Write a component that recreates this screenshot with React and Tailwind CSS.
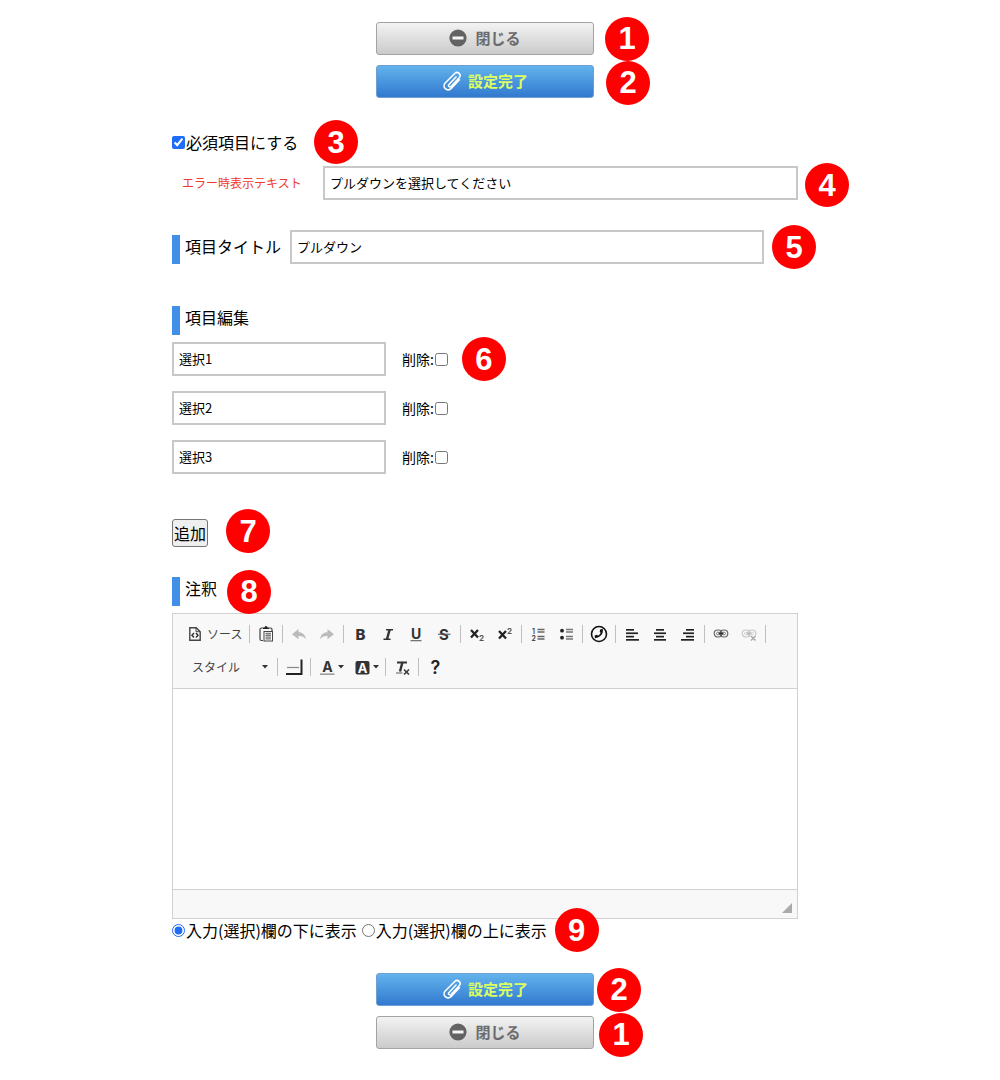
import React from "react";

const Badge = ({ children, className = "ml-2" }) => (
    <span className={`absolute left-full top-1/2 z-10 flex size-11 -translate-y-1/2 items-center justify-center rounded-full bg-[#ff0000] font-['Liberation_Sans',sans-serif] text-[31px] leading-none font-bold text-white ${className}`}>
        {children}
    </span>
)

function CloseButton({ badgeClass }) {
    return (
        <div className="relative">
            <button type="button" className="flex h-[33px] w-[218px] items-center justify-center gap-2 rounded-[3px] border border-[#a3a3a3] bg-linear-to-b from-[#f3f3f3] to-[#cbcbcb] pb-[2px] text-[15px] font-bold text-[#6b6b6b]">
                <svg viewBox="0 0 18 18" className="size-[18px]">
                    <circle cx="9" cy="9" r="8.6" fill="#636363" />
                    <rect x="3.5" y="7.5" width="11" height="3" fill="#f5f5f5" />
                </svg>
                閉じる
            </button>
            <Badge className={badgeClass}>1</Badge>
        </div>
    )
}

function DoneButton({ badgeClass }) {
    return (
        <div className="relative">
            <button type="button" className="flex h-[33px] w-[218px] items-center justify-center gap-[6px] rounded-[3px] border border-[#6f9fd0] bg-linear-to-b from-[#63b3ec] to-[#3279cf] pb-[2px] text-[15px] font-bold text-[#dcff62]">
                <svg viewBox="0 0 20 20" className="size-5" fill="none" stroke="#fff" strokeWidth="1.6" strokeLinecap="round">
                    <path d="M14 6 7 13.5a1.4 1.4 0 0 0 2 2l8.2-8.7a3.1 3.1 0 0 0-4.5-4.3L3.2 12a4 4 0 0 0 5.8 5.6l8.4-8.8" />
                </svg>
                設定完了
            </button>
            <Badge className={badgeClass}>2</Badge>
        </div>
    )
}

const Heading = ({ as: Tag = "h2", children, ...rest }) => (
    <Tag className="block h-[29px] border-l-8 border-[#428fe8] pl-[5px] text-base leading-[22px]" {...rest}>
        {children}
    </Tag>
)

const Glyph = ({ children }) => (
    <svg viewBox="0 0 20 20" className="size-5 font-[Inter,sans-serif]" fill="none" stroke="none">
        {children}
    </svg>
)

const Caret = () => (
    <svg viewBox="0 0 6 4" className="h-1 w-[6px]"><path d="M0 0h6L3 3.5z" fill="#333" /></svg>
)

const Sep = () => <span className="mx-[2px] h-[18px] w-px bg-[#c0c0c0]" />

const Tool = ({ label, wide, children }) => (
    <button type="button" aria-label={label} title={label} className={`flex h-7 items-center justify-center ${wide ? "w-[35px]" : "w-7"}`}>
        {children}
    </button>
)

const alignLines = {
    left: [[4, 8], [4, 12], [4, 8], [4, 13]],
    center: [[6, 8], [4, 12], [6, 8], [4, 12]],
    right: [[8, 8], [5, 11], [8, 8], [3, 13]],
}

const Align = ({ side }) => (
    <Glyph>
        {alignLines[side].map(([x, w], i) => (
            <rect key={i} x={x} y={[5, 8.4, 11.8, 15][i]} width={w} height="1.7" fill="#222" />
        ))}
    </Glyph>
)

const Chain = ({ color, link }) => (
    <>
        <rect x="3.2" y="6" width="7.6" height="7" rx="3.5" stroke={color} strokeWidth="1.2" />
        <rect x="9.2" y="6" width="7.6" height="7" rx="3.5" stroke={color} strokeWidth="1.2" />
        <rect x="5.5" y="8.2" width="3.5" height="2.6" rx="1.3" stroke={color} strokeWidth="0.8" />
        <rect x="11" y="8.2" width="3.5" height="2.6" rx="1.3" stroke={color} strokeWidth="0.8" />
        <path d="M7.5 9.5h5" stroke={link} strokeWidth="1.8" />
    </>
)

function Toolbar() {
    return (
        <div role="toolbar" className="flex flex-wrap items-center gap-y-[5px] border-b border-[#d1d1d1] bg-[#f8f8f8] px-2 pt-[6px] pb-[7px]">
            <button type="button" className="flex h-7 w-[66px] items-center gap-[2px] pl-1 text-[12px] whitespace-nowrap text-[#444]">
                <Glyph>
                    <path d="M4.8 3.7h6.4l4 4v8.6H4.8z" stroke="#444" strokeWidth="1.4" />
                    <path d="M11 3.7v4h4" stroke="#444" strokeWidth="1" />
                    <path d="m9 9-2 2.2 2 2.2M11 9l2 2.2-2 2.2" stroke="#333" strokeWidth="1.5" />
                </Glyph>
                ソース
            </button>
            <Sep />
            <Tool label="貼り付け">
                <Glyph>
                    <path d="M7 16.5H5.5A1.5 1.5 0 0 1 4 15V5.500A1.5 1.5 0 0 1 5.5 4H7M13 4h1.5A1.5 1.5 0 0 1 16 5.500V7" stroke="#444" strokeWidth="1.2" />
                    <path d="M7 5V3.500h1.500L9 2.300h2l.5 1.200H13V5z" fill="#222" />
                    <rect x="8" y="7.5" width="8.5" height="9.5" fill="#fff" stroke="#444" />
                    <path d="M9.5 9.500h5.500M9.500 11.300h5.500M9.500 13.100h5.500M9.500 14.900h5.500" stroke="#777" strokeWidth="1.3" />
                </Glyph>
            </Tool>
            <Sep />
            <Tool label="元に戻す">
                <Glyph><path d="M3 10.200 9.500 5v3.300c4 0 6.500 2.200 7.500 6.700-2-2.500-4.200-3.200-7.500-3.100v3.400z" fill="#bbb" /></Glyph>
            </Tool>
            <Tool label="やり直す">
                <Glyph><path d="M17 10.200 10.500 5v3.300c-4 0-6.500 2.200-7.500 6.700 2-2.500 4.200-3.200 7.500-3.100v3.400z" fill="#bbb" /></Glyph>
            </Tool>
            <Sep />
            <Tool label="太字">
                <Glyph><text x="10.5" y="16" textAnchor="middle" fontSize="15" fontWeight="800" fill="#333">B</text></Glyph>
            </Tool>
            <Tool label="斜体">
                <Glyph>
                    <path d="M8 5.800h7M5.500 15.200h7" stroke="#333" strokeWidth="1.6" />
                    <path d="M11.700 5.500 8.900 15.500" stroke="#333" strokeWidth="2.4" />
                </Glyph>
            </Tool>
            <Tool label="下線">
                <Glyph>
                    <text x="10" y="14.500" textAnchor="middle" fontSize="14" fontWeight="700" fill="#333">U</text>
                    <rect x="4.5" y="16" width="11" height="1.3" fill="#777" />
                </Glyph>
            </Tool>
            <Tool label="打ち消し線">
                <Glyph>
                    <text x="10" y="15.500" textAnchor="middle" fontSize="15" fontWeight="700" fill="#333">S</text>
                    <rect x="4" y="9.7" width="12.5" height="1.1" fill="#555" />
                </Glyph>
            </Tool>
            <Sep />
            <Tool label="下付き">
                <Glyph>
                    <path d="m4 6 7 7.500M11 6l-7 7.500" stroke="#222" strokeWidth="2.3" />
                    <text x="12" y="17" fontSize="8" fontWeight="700" fill="#555">2</text>
                </Glyph>
            </Tool>
            <Tool label="上付き">
                <Glyph>
                    <path d="m4 7 7 7.500M11 7l-7 7.500" stroke="#222" strokeWidth="2.3" />
                    <text x="12" y="10" fontSize="8" fontWeight="700" fill="#555">2</text>
                </Glyph>
            </Tool>
            <Sep />
            <Tool label="番号付きリスト">
                <Glyph>
                    <text x="4" y="9.500" fontSize="7" fontWeight="600" fill="#333">1</text>
                    <text x="3.500" y="17" fontSize="7" fontWeight="600" fill="#333">2</text>
                    <path d="M9.500 5.500h7M9.500 8h7M9.500 12.500h7M9.500 15h7" stroke="#666" strokeWidth="1.3" />
                </Glyph>
            </Tool>
            <Tool label="番号なしリスト">
                <Glyph>
                    <circle cx="6" cy="6.7" r="1.9" fill="#222" />
                    <circle cx="6" cy="13.7" r="1.9" fill="#222" />
                    <path d="M10 5.500h7M10 8h7M10 12.500h7M10 15h7" stroke="#777" strokeWidth="1.3" />
                </Glyph>
            </Tool>
            <Sep />
            <Tool label="電話番号">
                <Glyph>
                    <circle cx="10" cy="10" r="7.5" stroke="#111" strokeWidth="1.6" />
                    <path d="m11.200 5.600 2.400-.8c1.300 4.200-1.600 8.900-7.600 9.400l-.4-2.600 2.400-.8 1 .9c1.200-.6 2.100-1.500 2.600-2.900l-.9-1z" fill="#111" />
                </Glyph>
            </Tool>
            <Sep />
            <Tool label="左揃え"><Align side="left" /></Tool>
            <Tool label="中央揃え"><Align side="center" /></Tool>
            <Tool label="右揃え"><Align side="right" /></Tool>
            <Sep />
            <Tool label="リンク"><Glyph><Chain color="#666" link="#333" /></Glyph></Tool>
            <Tool label="リンクを削除">
                <Glyph>
                    <Chain color="#c8c8c8" link="#bbb" />
                    <path d="m12 12 4.500 4.500M16.500 12 12 16.500" stroke="#f8f8f8" strokeWidth="3.5" />
                    <path d="m12 12 4.500 4.500M16.500 12 12 16.500" stroke="#aaa" strokeWidth="1.5" />
                </Glyph>
            </Tool>
            <Sep />

            <div className="relative flex h-7 w-[94px] items-center">
                <select aria-label="スタイル" className="h-7 w-full appearance-none bg-transparent pl-[11px] text-[12px] text-[#444]">
                    <option>スタイル</option>
                </select>
                <span className="pointer-events-none absolute right-[7px] flex"><Caret /></span>
            </div>
            <Sep />
            <Tool label="枠線">
                <Glyph>
                    <path d="M3 10.500h12" stroke="#888" strokeWidth="1.2" />
                    <path d="M2 17h15.500V2.500" stroke="#222" strokeWidth="2" />
                </Glyph>
            </Tool>
            <Sep />
            <Tool label="文字色" wide>
                <Glyph>
                    <text x="9.500" y="15" textAnchor="middle" fontSize="14" fontWeight="700" fill="#333">A</text>
                    <rect x="2" y="16.5" width="14.5" height="1.3" fill="#888" />
                </Glyph>
                <Caret />
            </Tool>
            <Tool label="背景色" wide>
                <Glyph>
                    <rect x="2.5" y="4" width="14" height="13.5" rx="2" fill="#333" />
                    <text x="9.500" y="15.500" textAnchor="middle" fontSize="13" fontWeight="700" fill="#fff">A</text>
                </Glyph>
                <Caret />
            </Tool>
            <Sep />
            <Tool label="書式を解除">
                <Glyph>
                    <path d="M5 5.500h10" stroke="#333" strokeWidth="2" />
                    <path d="M10.500 5 8 14.500" stroke="#333" strokeWidth="2.4" />
                    <path d="M4 16h6.500" stroke="#777" strokeWidth="1.2" />
                    <path d="m12 12.500 5 5M17 12.500l-5 5" stroke="#333" strokeWidth="1.5" />
                </Glyph>
            </Tool>
            <Sep />
            <Tool label="ヘルプ">
                <Glyph><text x="10.500" y="17" textAnchor="middle" fontSize="18" fontWeight="600" fill="#222">?</text></Glyph>
            </Tool>
        </div>
    )
}

const boxClass = "h-[34px] border-2 border-[#c8c8c8] bg-white px-[5px] pb-[2px] text-[13px] text-black"

function App() {
    const choices = ["選択1", "選択2", "選択3"]

    return (
        <main className="min-h-screen bg-white pt-[22px] pr-[30px] pb-8 font-['Noto_Sans_CJK_JP',sans-serif] text-base leading-6 text-black">
            <form className="mx-auto flex max-w-[626px] flex-col">
                <div className="flex flex-col items-center gap-[10px]">
                    <CloseButton badgeClass="ml-[11px]" />
                    <DoneButton badgeClass="ml-3 mt-px" />
                </div>

                <div className="relative mt-8 flex w-fit items-center gap-px">
                    <input type="checkbox" id="required" defaultChecked className="size-[13px] accent-[#1f6cf5]" />
                    <label htmlFor="required">必須項目にする</label>
                    <Badge className="ml-4">3</Badge>
                </div>
                <div className="relative mt-3 flex items-center">
                    <label htmlFor="errorText" className="w-[151px] shrink-0 pl-[10px] text-[12px] text-[#ee3b30]">エラー時表示テキスト</label>
                    <input type="text" id="errorText" defaultValue="プルダウンを選択してください" className={`min-w-0 flex-1 ${boxClass}`} />
                    <Badge className="mt-[2px] ml-[7px]">4</Badge>
                </div>

                <div className="relative mt-[30px] flex w-fit max-w-full items-end gap-[9px]">
                    <Heading as="label" htmlFor="title">項目タイトル</Heading>
                    <input type="text" id="title" defaultValue="プルダウン" className={`w-[474px] min-w-0 ${boxClass}`} />
                    <Badge>5</Badge>
                </div>

                <div className="mt-[42px]">
                    <Heading>項目編集</Heading>
                </div>
                <div className="mt-[7px] flex flex-col gap-[15px]">
                    {choices.map((choice, i) => (
                        <div key={choice} className="relative flex w-fit items-center">
                            <input type="text" aria-label={`項目${i + 1}`} defaultValue={choice} className={`w-[214px] ${boxClass}`} />
                            <label className="ml-4 flex items-center gap-px text-[14px]">
                                削除:
                                <input type="checkbox" className="size-[13px]" />
                            </label>
                            {i === 0 ? <Badge className="ml-[14px]">6</Badge> : null}
                        </div>
                    ))}
                </div>

                <div className="relative mt-[45px] w-fit">
                    <button type="button" className="block h-7 rounded-[3px] border border-[#767676] bg-[#efefef] px-px">追加</button>
                    <Badge className="-mt-[2px] ml-[18px]">7</Badge>
                </div>

                <div className="relative mt-[30px] w-fit">
                    <Heading>注釈</Heading>
                    <Badge className="ml-[10px]">8</Badge>
                </div>
                <div className="mt-[7px] border border-[#d1d1d1]">
                    <Toolbar />
                    <textarea aria-label="注釈" className="block h-[200px] w-full resize-none bg-white p-5 text-[13px]" />
                    <div className="flex h-[29px] items-end justify-end border-t border-[#d1d1d1] bg-[#f8f8f8] p-[5px]">
                        <svg viewBox="0 0 10 10" className="size-[10px]"><path d="M10 0v10H0z" fill="#aaa" /></svg>
                    </div>
                </div>
                <div className="relative flex w-fit items-center gap-px leading-[22px]">
                    <input type="radio" name="position" id="below" defaultChecked className="size-[13px] accent-[#1f6cf5]" />
                    <label htmlFor="below" className="mr-1">入力(選択)欄の下に表示</label>
                    <input type="radio" name="position" id="above" className="size-[13px]" />
                    <label htmlFor="above">入力(選択)欄の上に表示</label>
                    <Badge>9</Badge>
                </div>

                <div className="mt-8 flex flex-col items-center gap-[10px]">
                    <DoneButton badgeClass="ml-[3px]" />
                    <CloseButton badgeClass="ml-[5px] mt-[2px]" />
                </div>
            </form>
        </main>
    )
}

export default App
